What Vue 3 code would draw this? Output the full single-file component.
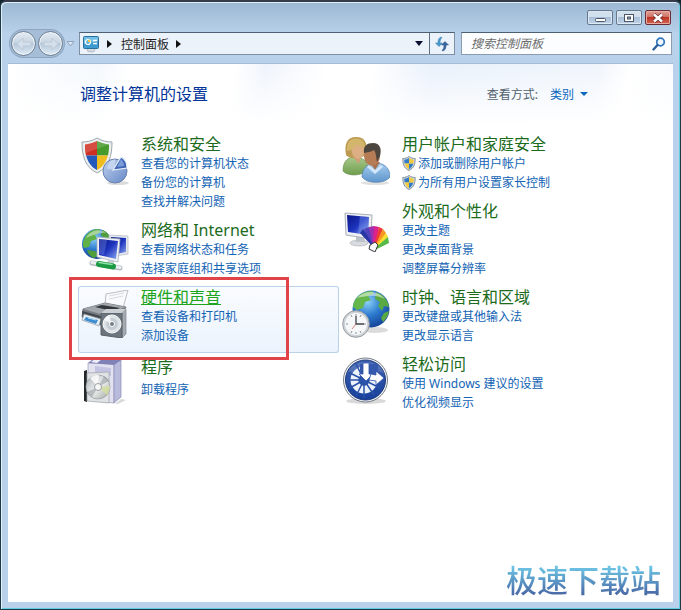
<template>
  <div class="window">
    <!-- Window buttons -->
    <header class="title-bar">
      <button class="win-btn" aria-label="最小化">
        <svg width="26" height="14" viewBox="0 0 26 14"><rect x="8.5" y="7.5" width="10" height="3" rx="1" fill="#fff" stroke="#4b5563" /></svg>
      </button>
      <button class="win-btn" aria-label="最大化">
        <svg width="26" height="14" viewBox="0 0 26 14">
          <rect x="8.5" y="3.5" width="9" height="7" fill="#fff" stroke="#4b5563" />
          <rect x="11.5" y="6" width="3" height="2" fill="#8fa6c0" stroke="#4b5563" />
        </svg>
      </button>
      <button class="win-btn close" aria-label="关闭">
        <svg width="26" height="14" viewBox="0 0 26 14">
          <path d="M9 3.5l8 7M17 3.5l-8 7" stroke="#6c3038" stroke-width="4" />
          <path d="M9 3.5l8 7M17 3.5l-8 7" stroke="#fff" stroke-width="2.4" />
        </svg>
      </button>
    </header>

    <!-- Navigation -->
    <nav class="nav-bar">
      <div class="history">
        <button class="round-btn" aria-label="后退">
          <svg width="24" height="24" viewBox="0 0 24 24"><path d="M11 6l-6 6 6 6v-4h8v-4h-8z" fill="#d3dfea" stroke="#bccad8" /></svg>
        </button>
        <button class="round-btn" aria-label="前进">
          <svg width="24" height="24" viewBox="0 0 24 24"><path d="M13 6l6 6-6 6v-4H5v-4h8z" fill="#d3dfea" stroke="#bccad8" /></svg>
        </button>
      </div>
      <button class="recent" aria-label="最近浏览">
        <svg width="9" height="6" viewBox="0 0 9 6"><path d="M1 .5h7L4.500 5z" fill="#d8e6f4" stroke="#8fa4bb" /></svg>
      </button>
      <div class="address">
        <svg class="address-icon" width="18" height="18" viewBox="0 0 18 18">
          <ellipse cx="9" cy="15" rx="4" ry="2" fill="#d5dbe2" stroke="#9aa5b0" stroke-width=".6" />
          <rect x="1.500" y="1.500" width="15" height="12" rx="1" fill="#3d9bd0" stroke="#2b6f9e" />
          <path d="M2 2h14v4L2 9z" fill="#72c0e6" />
          <circle cx="6" cy="7" r="2.500" fill="#5bb3dd" stroke="#fff" stroke-width="1.200" />
          <path d="M6 7V4.500A2.500 2.500 0 0 1 8.500 7z" fill="#f4c542" />
          <path d="M11 5.500h4M11 8.500h4" stroke="#fff" stroke-width="1.500" />
        </svg>
        <svg class="crumb-arrow" width="5" height="8" viewBox="0 0 5 8"><path d="M0 0l5 4-5 4z" fill="#111" /></svg>
        <button class="crumb">控制面板</button>
        <svg class="crumb-arrow" width="5" height="8" viewBox="0 0 5 8"><path d="M0 0l5 4-5 4z" fill="#111" /></svg>
        <button class="address-drop" aria-label="历史记录">
          <svg width="8" height="5" viewBox="0 0 8 5"><path d="M0 0h8L4 5z" fill="#0b1030" /></svg>
        </button>
        <button class="refresh" aria-label="刷新">
          <svg width="16" height="16" viewBox="0 0 16 16">
            <path d="M7 1C4.500 2 4 4 4 7H1.500L5 10.500 8.500 7H6c0-2.500.5-4 2-5.500z" fill="#4a9bd0" stroke="#2f78ad" stroke-width=".5" />
            <path d="M9 15c2.500-1 3-3 3-6h2.500L11 5.500 7.500 9H10c0 2.500-.5 4-2 5.500z" fill="#37679f" stroke="#284f82" stroke-width=".5" />
          </svg>
        </button>
      </div>
      <label class="search">
        <input type="text" placeholder="搜索控制面板" aria-label="搜索控制面板" />
        <svg width="14" height="14" viewBox="0 0 14 14">
          <circle cx="8.500" cy="5" r="3.800" fill="#eef7ff" stroke="#2f76bd" stroke-width="1.700" />
          <path d="M5.500 8L1.500 12.500" stroke="#2b5c9c" stroke-width="2.300" stroke-linecap="round" />
        </svg>
      </label>
    </nav>

    <!-- Content -->
    <main class="content">
      <div class="content-head">
        <h1>调整计算机的设置</h1>
        <div class="view-by">
          <label for="view-mode">查看方式:</label>
          <div class="view-select">
            <select id="view-mode" v-model="viewMode">
              <option>类别</option>
            </select>
            <svg width="8" height="4" viewBox="0 0 8 4"><path d="M0 0h8L4 4z" fill="#0b66bd" /></svg>
          </div>
        </div>
      </div>

      <div class="categories">
        <div v-for="(column, index) in columns" :key="index" class="column">
          <section
            v-for="item in column"
            :key="item.title"
            class="category"
            :class="{ active: item.active, single: item.links.length === 1 }"
          >
            <!-- Shield and pie -->
            <svg v-if="item.icon === 'security'" class="icon" viewBox="0 0 48 48">
              <ellipse cx="37" cy="46" rx="11" ry="2" fill="#000" opacity=".14" />
              <path d="M16 1C11 4 6 5 1 5c0 14 3 25 15 31C28 30 31 19 31 5 26 5 21 4 16 1z" fill="#eceff1" stroke="#9fa7ac" />
              <path d="M16 4C12 6 8 7 4 7.500c0 4 .2 7.500 1 11h11z" fill="#cf2f20" />
              <path d="M16 4c4 2 8 3 12 3.500 0 4-.2 7.500-1 11H16z" fill="#479a2c" />
              <path d="M5 18.500C7 25 10 30 16 33V18.500z" fill="#2259bb" />
              <path d="M27 18.500C25 25 22 30 16 33V18.500z" fill="#efbd1f" />
              <path d="M4 7.500C8 7 12 6 16 4c4 2 8 3 12 3.500L5 16z" fill="#fff" opacity=".15" />
              <circle cx="34" cy="34" r="12" fill="url(#pie)" stroke="#6780ae" />
              <path d="M34 33V22a12 12 0 0 0-8 10z" fill="#d8e5f8" opacity=".6" />
              <path d="M32 33l8-13c4 2 6 6 6 11z" fill="#3f65b4" stroke="#e6effc" stroke-width="1.200" />
              <path d="M36 30l4-8c2 2 3 4 3 7z" fill="#7a9bd9" />
            </svg>

            <!-- Globe and monitors -->
            <svg v-else-if="item.icon === 'network'" class="icon" viewBox="0 0 48 48">
              <circle cx="16" cy="21" r="15" fill="url(#earth)" />
              <path d="M3 16C6 9 12 6 18 6c3 3-1 5-4 6l2 4-6 2-2 6-5 1c-2-3-1-6 0-9z" fill="#5fb047" />
              <path d="M6 27l8 1 4 4-5 3c-3-1-6-4-7-8zM21 7c4 1 7 4 8 8l-5 1-4-4z" fill="#4f9e3b" />
              <path d="M5 15C9 7 20 5 25 10c-5-1-15 3-20 5z" fill="#fff" opacity=".45" />
              <path d="M28 12l19 1v18l-19 3z" fill="#e5e8ed" stroke="#b3bac4" stroke-width=".7" />
              <path d="M30 14l15 1v14l-15 3z" fill="url(#screen)" />
              <path d="M16 14l23 2-2 23-21-5z" fill="#eff1f4" stroke="#aab2bd" stroke-width=".8" />
              <path d="M18 16l19 2-2 18-17-4z" fill="url(#screen)" />
              <path d="M18 16l8 1-3 15-5-1z" fill="#8da7f4" opacity=".3" />
              <path d="M27 37l6 1v3l-7-1z" fill="#c7ccd2" />
              <path d="M11 40l28 5" stroke="#b3bac0" stroke-width="5" stroke-linecap="round" />
              <path d="M11 39.500l28 5" stroke="#eceff1" stroke-width="3" stroke-linecap="round" />
              <path d="M18 41l14 2.500" stroke="#1c9a43" stroke-width="6" stroke-linecap="round" />
              <path d="M18 39.500l13 2" stroke="#8be3a2" stroke-width="1.500" stroke-linecap="round" />
            </svg>

            <!-- Printer and speaker -->
            <svg v-else-if="item.icon === 'hardware'" class="icon" viewBox="0 0 48 48">
              <path d="M25 4l22-4-5 18-18-3z" fill="#f9fafb" stroke="#a8aeb5" stroke-width=".8" />
              <path d="M28 6l15-3M28 9l14-3" stroke="#d7dbe0" />
              <path d="M2 19l22-6 21 4-4 8-21 10L1 27z" fill="#777c82" stroke="#55595e" stroke-width=".7" />
              <path d="M2 19l22-6 21 4-22 8z" fill="#a2a7ad" />
              <path d="M21 15l18 3-8 3-17-4z" fill="#34383d" />
              <path d="M1 21l22 6v9L2 29z" fill="#42474d" />
              <path d="M3 24l17 5-2 7L1 30z" fill="#e6edf4" stroke="#8d979f" stroke-width=".7" />
              <path d="M5 27l12 3-2 4-12-4z" fill="#3c8ed0" />
              <path d="M7 28l8 2" stroke="#b9ddf5" />
              <path d="M41 23l4-4v25l-4 4z" fill="#a4aab0" stroke="#82888f" stroke-width=".7" />
              <path d="M20 23h21v25l-21-3z" fill="#6c757d" stroke="#596067" />
              <path d="M20 23l5-4h20l-4 4z" fill="#cbd0d5" />
              <circle cx="31" cy="34" r="9" fill="#dfe4e8" stroke="#f7f8f9" />
              <circle cx="31" cy="34" r="6" fill="#c5ccd1" />
              <path d="M31 34l-8-4a9 9 0 0 1 5-5z" fill="#fff" opacity=".75" />
              <circle cx="31" cy="34" r="2.500" fill="#737d85" stroke="#fff" />
            </svg>

            <!-- Software box -->
            <svg v-else-if="item.icon === 'programs'" class="icon" viewBox="0 0 48 48">
              <path d="M34 45l6-5 5 1-8 4z" fill="#000" opacity=".15" />
              <path d="M7 4l26-1v41L7 41z" fill="#e1e1f0" stroke="#9b9cba" stroke-width=".7" />
              <path d="M33 5l7-4v37l-7 6z" fill="#b9bbdc" stroke="#898bb5" stroke-width=".7" />
              <path d="M7 4l5-4 28 1-7 5z" fill="#7f81b7" />
              <path d="M10 3l4-3h7l-5 4z" fill="#eeeef8" />
              <path d="M14 7l16 2v8L14 15z" fill="#c3c3e4" />
              <path d="M3 12l3-1v32l-3-1z" fill="#24282d" />
              <path d="M6 14l22-1v31L6 42z" fill="#e0e3e5" stroke="#9ca1a5" stroke-width=".7" />
              <circle cx="17" cy="28" r="12" fill="url(#disc)" stroke="#959b9f" stroke-width=".7" />
              <path d="M17 28L9 19c3-3 6-4 9-3z" fill="#fff" opacity=".8" />
              <path d="M17 28l9 8c2-3 3-6 3-9z" fill="#d3dfa0" opacity=".8" />
              <path d="M17 28l11-6c-1-2-3-4-5-5z" fill="#6c7478" opacity=".4" />
              <path d="M17 28L6 33c1 2 3 4 5 5z" fill="#6c7478" opacity=".4" />
              <circle cx="17" cy="28" r="3.500" fill="#f7f8f8" stroke="#989fa3" />
            </svg>

            <!-- People -->
            <svg v-else-if="item.icon === 'users'" class="icon" viewBox="0 0 48 48">
              <ellipse cx="33" cy="46" rx="14" ry="2" fill="#000" opacity=".12" />
              <path d="M1 34c0-10 5-14 12-14s13 4 13 12c-4 7-20 8-25 2z" fill="url(#green)" stroke="#6b9153" stroke-width=".7" />
              <path d="M10 19h9l-2 8z" fill="#cf9e74" />
              <path d="M4 18C2 7 5 0 14 0c9 0 12 6 10 17-3 5-16 6-20 1z" fill="#bc9a51" />
              <ellipse cx="16" cy="13" rx="6.500" ry="9" fill="#dcae84" />
              <path d="M5 14C4 4 10 0 17 2c5 1 6 5 6 9-5-1-8-3-9-4-1 4-5 7-9 7z" fill="#d3b66c" />
              <path d="M20 40c0-9 6-14 14-14s14 5 14 14c-5 7-23 7-28 0z" fill="url(#blueShirt)" stroke="#4e7fae" stroke-width=".7" />
              <path d="M28 25h10l-5 8z" fill="#a8704b" />
              <ellipse cx="30" cy="19" rx="8" ry="10" fill="#b57c55" />
              <path d="M22 16C21 9 25 6 31 6c7 0 9 6 7 13l-3 6c-1-6-1-9-3-12-3 2-7 2-10 3z" fill="#4d463f" />
              <path d="M27 28l6 5 6-5 2 2-8 7-8-7z" fill="#d2e7fa" />
            </svg>

            <!-- Monitor and swatches -->
            <svg v-else-if="item.icon === 'appearance'" class="icon" viewBox="0 0 48 48">
              <ellipse cx="17" cy="39" rx="9" ry="3" fill="#d8dce0" stroke="#a4aab0" stroke-width=".6" />
              <path d="M14 31h8l1 7h-9z" fill="#bdc3c9" />
              <path d="M3 9l27 2-1 24-25-4z" fill="#eef0f3" stroke="#a8afb8" />
              <path d="M5 11l22 2-1 18-20-3z" fill="url(#screen)" />
              <path d="M18 12l9 1-1 18-10-2z" fill="#9ab5ff" opacity=".3" />
              <path d="M30 42l-12-13 3-4 12 14z" fill="#2735a5" />
              <path d="M31 42l-9-17 5-2 7 17z" fill="#5241bd" />
              <path d="M31 42l-4-19 5-1 3 20z" fill="#9d2fb0" />
              <path d="M31 42l1-20 5 1-3 19z" fill="#dc238d" />
              <path d="M32 42l5-19 4 2-7 17z" fill="#ee3b35" />
              <path d="M33 42l8-17 3 4-9 14z" fill="#f69724" />
              <path d="M33 43l11-14 2 4-11 11z" fill="#f5df30" />
              <path d="M33 44l13-11 1 6-12 6z" fill="#57b947" />
              <path d="M28 41l5-3 3 3-3 7-6-3z" fill="#f8f8f8" stroke="#35373c" />
            </svg>

            <!-- Globe and clock -->
            <svg v-else-if="item.icon === 'clock'" class="icon" viewBox="0 0 48 48">
              <ellipse cx="33" cy="40" rx="13" ry="3" fill="#000" opacity=".14" />
              <circle cx="29" cy="19" r="18.500" fill="url(#earth)" />
              <path d="M13 10c4-6 10-9 17-9l2 3-6 2 3 4-6 2-2 6-6 2-4-3c0-3 1-5 2-7z" fill="#65b64b" />
              <path d="M34 2c7 2 12 8 13 15l-5-1-2 5-4-5 2-4-5-3zM42 23l5-2c-1 5-3 8-6 11l-2-4z" fill="#5aa943" />
              <path d="M15 8C24-1 36 1 43 9c-10-5-18-3-28-1z" fill="#fff" opacity=".5" />
              <circle cx="14" cy="34" r="13.300" fill="#cdd2d6" stroke="#989fa5" />
              <circle cx="14" cy="34" r="11" fill="#f6f7f8" />
              <path d="M14 24v2M14 42v2M4 34h2M22 34h2M9 25l1 2M18 41l1 2M19 25l-1 2M9 43l1-2" stroke="#8b9197" />
              <path d="M14 26v8h8" fill="none" stroke="#3e444a" stroke-width="1.300" />
              <path d="M14 34l-4 5" stroke="#d34c44" stroke-width=".7" />
            </svg>

            <!-- Ease of access -->
            <svg v-else class="icon" viewBox="0 0 48 48">
              <ellipse cx="24" cy="44" rx="20" ry="3" fill="#000" opacity=".15" />
              <circle cx="23.500" cy="23" r="22" fill="#f4f5f7" stroke="#747c88" />
              <circle cx="23.500" cy="23" r="20" fill="url(#ease)" stroke="#1c397b" />
              <path d="M5 17C9 2 37 0 43 17c-9-5-26-5-38 0z" fill="#fff" opacity=".15" />
              <circle cx="22" cy="23" r="9.500" fill="none" stroke="#eef2fb" stroke-width="8" />
              <path d="M22 23L14 7M22 23L6 15M22 23H4M22 23L6 32M22 23l-8 16M22 23v18M22 23l10 15M22 23l16 8" stroke="#2b52a9" stroke-width="1.500" />
              <circle cx="22" cy="23" r="5.500" fill="#2b52a9" />
              <path d="M18 7h18v16H26l-4-2-4-2z" fill="#3559ac" />
              <path d="M21 6h6v11h4l-7 7-7-7h4z" fill="#fff" stroke="#2b52a9" stroke-width=".8" />
              <path d="M29 17l5 1v-4l8 7-8 7v-4l-7-1z" fill="#fff" stroke="#2b52a9" stroke-width=".8" />
            </svg>

            <div class="category-text">
              <h2><a href="#">{{ item.title }}</a></h2>
              <a v-for="link in item.links" :key="link" href="#" class="task">
                <svg v-if="item.shield" class="uac" viewBox="0 0 14 15">
                  <path d="M7 .5C5 2 3 2.500.800 2.500c0 6 1.200 9.500 6.200 12 5-2.500 6.200-6 6.200-12C11 2.500 9 2 7 .5z" fill="#d3dade" stroke="#6d7b87" stroke-width=".8" />
                  <path d="M7 2C5.500 3 4 3.500 2.200 3.700L2.600 7.500H7zM7 7.500h4.400C10.600 10 9.500 12 7 13.200z" fill="#327bc5" />
                  <path d="M7 2c1.500 1 3 1.500 4.800 1.700l-.4 3.800H7zM7 7.500H2.600C3.400 10 4.500 12 7 13.200z" fill="#f4ca3c" />
                </svg>
                {{ link }}
              </a>
            </div>
            <div v-if="item.active" class="marker"></div>
          </section>
        </div>
      </div>

      <div class="watermark">极速下载站</div>
    </main>

    <!-- Shared gradients -->
    <svg class="defs" width="0" height="0" aria-hidden="true">
      <defs>
        <linearGradient id="pie" x1="0" y1="0" x2="1" y2="1">
          <stop offset="0" stop-color="#c0d2ee" />
          <stop offset="1" stop-color="#6688c6" />
        </linearGradient>
        <radialGradient id="earth" cx=".4" cy=".3" r=".75">
          <stop offset="0" stop-color="#8ed3f7" />
          <stop offset=".5" stop-color="#2d7bd0" />
          <stop offset="1" stop-color="#123e91" />
        </radialGradient>
        <linearGradient id="screen" x1="0" y1="0" x2="1" y2="1">
          <stop offset="0" stop-color="#0a1585" />
          <stop offset=".5" stop-color="#1c33bd" />
          <stop offset="1" stop-color="#8ea8f0" />
        </linearGradient>
        <linearGradient id="disc" x1="0" y1="0" x2="1" y2="1">
          <stop offset="0" stop-color="#a7adb1" />
          <stop offset=".5" stop-color="#eef0f0" />
          <stop offset="1" stop-color="#9ba59d" />
        </linearGradient>
        <linearGradient id="green" x1="0" y1="0" x2="0" y2="1">
          <stop offset="0" stop-color="#a9c98b" />
          <stop offset="1" stop-color="#6f9e4e" />
        </linearGradient>
        <linearGradient id="blueShirt" x1="0" y1="0" x2="0" y2="1">
          <stop offset="0" stop-color="#a6cdf0" />
          <stop offset="1" stop-color="#5e96cb" />
        </linearGradient>
        <linearGradient id="ease" x1="0" y1="0" x2="0" y2="1">
          <stop offset="0" stop-color="#3c60b0" />
          <stop offset="1" stop-color="#173f9b" />
        </linearGradient>
      </defs>
    </svg>
  </div>
</template>

<script setup>
import { ref } from 'vue'

const viewMode = ref('类别')

const columns = [
  [
    { title: '系统和安全', icon: 'security', links: ['查看您的计算机状态', '备份您的计算机', '查找并解决问题'] },
    { title: '网络和 Internet', icon: 'network', links: ['查看网络状态和任务', '选择家庭组和共享选项'] },
    { title: '硬件和声音', icon: 'hardware', links: ['查看设备和打印机', '添加设备'], active: true },
    { title: '程序', icon: 'programs', links: ['卸载程序'] }
  ],
  [
    { title: '用户帐户和家庭安全', icon: 'users', links: ['添加或删除用户帐户', '为所有用户设置家长控制'], shield: true },
    { title: '外观和个性化', icon: 'appearance', links: ['更改主题', '更改桌面背景', '调整屏幕分辨率'] },
    { title: '时钟、语言和区域', icon: 'clock', links: ['更改键盘或其他输入法', '更改显示语言'] },
    { title: '轻松访问', icon: 'ease', links: ['使用 Windows 建议的设置', '优化视频显示'] }
  ]
]
</script>

<style>
body {
  background: #10242e;
}
</style>

<style scoped>
.window {
  display: flex;
  flex-direction: column;
  box-sizing: border-box;
  min-height: 100vh;
  padding: 0 7px 7px;
  border: 1px solid #1d3a48;
  border-top: 2px solid #343c4c;
  border-radius: 6px 6px 0 0;
  background: linear-gradient(#9bb8d3, #b9d1ea 32px, #b9d1ea);
  box-shadow: inset 1px 1px 0 #e3eef8, inset -1px -1px 0 #62cfe0;
  font-family: "Noto Sans", "Noto Sans CJK SC", sans-serif;
  font-size: 12px;
  color: #1e1e1e;
}

button,
input,
select {
  font: inherit;
  color: inherit;
  margin: 0;
  padding: 0;
  border: none;
  background: none;
}

svg {
  flex: none;
}

/* Title bar */
.title-bar {
  display: flex;
  justify-content: flex-end;
  gap: 3px;
  height: 22px;
  padding: 8px 2px 0 0;
}

.win-btn {
  display: flex;
  align-items: center;
  justify-content: center;
  box-sizing: border-box;
  width: 26px;
  height: 15px;
  overflow: hidden;
  border: 1px solid #66788c;
  border-radius: 2px;
  background: linear-gradient(#d2e0ee 50%, #a9bfd7 50%, #c0d4e8);
  box-shadow: inset 0 0 0 1px #dce8f4;
}

.win-btn.close {
  border-color: #6b2c34;
  background: linear-gradient(#e0a098, #cf6c60 50%, #b93426 50%, #d4644c);
  box-shadow: inset 0 0 0 1px #e6aca4;
}

/* Navigation */
.nav-bar {
  display: flex;
  align-items: center;
  height: 23px;
  padding: 0 1px 8px 2px;
}

.history {
  display: flex;
  gap: 2px;
  margin: -1px 0;
  padding: 1px;
  border-radius: 14px;
  background: #a5bdd6;
  box-shadow: 0 0 0 1px #8ea6bf;
}

.round-btn {
  display: flex;
  align-items: center;
  justify-content: center;
  box-sizing: border-box;
  width: 25px;
  height: 25px;
  border: 1px solid #6d7f93;
  border-radius: 50%;
  background: linear-gradient(#e3ebf3, #c6d3e0 50%, #b6c8da 50%, #dfeaf5);
  box-shadow: inset 0 0 0 1px #eff5fa;
}

.recent {
  display: flex;
  padding: 0 4px 0 2px;
}

.address {
  display: flex;
  align-items: center;
  flex: 1;
  box-sizing: border-box;
  height: 23px;
  padding-left: 2px;
  border: 1px solid #7d8fa3;
  border-top-color: #4d5f73;
  background: #ecf2fa;
}

.crumb-arrow {
  margin: 0 9px 0 7px;
}

.address-drop {
  display: flex;
  align-items: center;
  justify-content: center;
  width: 20px;
  height: 21px;
  margin-left: auto;
}

.refresh {
  display: flex;
  align-items: center;
  justify-content: center;
  width: 25px;
  height: 21px;
  border-left: 1px solid #5e7084;
}

.search {
  display: flex;
  align-items: center;
  box-sizing: border-box;
  width: 211px;
  height: 23px;
  margin-left: 6px;
  padding: 0 5px 0 9px;
  border: 1px solid #8a9caf;
  border-top-color: #4d5f73;
  background: #fbfdff;
}

.search input {
  flex: 1;
  min-width: 0;
  outline: none;
}

.search input::placeholder {
  font-style: italic;
  color: #6c6c6c;
  opacity: 1;
}

/* Content */
.content {
  display: flex;
  flex-direction: column;
  flex: 1;
  border-top: 1px solid #a2bdd6;
  background:
    linear-gradient(transparent, #fff 60px),
    linear-gradient(100deg, #fff 0, #f3f8fd 12%, #fff 16%, #fff 30%, #eff4fc 34%, #fff 42%, #fff 48%, #e9f1fb 56%, #f0f5fc 78%, #fff 82%, #e8f2fb);
}

.content-head {
  display: flex;
  align-items: center;
  justify-content: space-between;
  height: 24px;
  padding: 18px 85px 27px 72px;
}

h1 {
  margin: 0;
  font-size: 16px;
  font-weight: 400;
  line-height: 24px;
  color: #003399;
}

.view-by {
  display: flex;
  align-items: center;
  gap: 12px;
  color: #52626f;
}

.view-select {
  display: flex;
  align-items: center;
  gap: 5px;
}

.view-select select {
  appearance: none;
  color: #0b66bd;
}

.categories {
  display: flex;
  padding: 0 73px 0 70px;
}

.column {
  flex: 1;
  min-width: 0;
}

.category {
  position: relative;
  display: flex;
  box-sizing: border-box;
  padding: 0 2px 7px;
  border: 1px solid transparent;
  border-top: none;
  border-radius: 3px;
}

.category.active {
  border-color: #b9d2ea;
  background: linear-gradient(#fafcff, #ebf3fc);
  box-shadow: inset 0 1px 0 #b9d2ea;
}

.icon {
  width: 48px;
  height: 48px;
  margin: 4px 12px 0 0;
}

.category-text {
  display: flex;
  flex-direction: column;
  align-items: flex-start;
  padding-top: 1px;
  white-space: nowrap;
}

h2 {
  margin: 0;
  font-size: 16px;
  font-weight: 400;
  line-height: 20px;
}

a {
  text-decoration: none;
}

h2 a {
  color: #1c6b1c;
}

.active h2 a {
  color: #1ea51e;
  text-decoration: underline;
}

.task {
  display: flex;
  align-items: center;
  gap: 2px;
  line-height: 19px;
  color: #1263b4;
}

.uac {
  width: 14px;
  height: 15px;
}

.single .icon {
  margin-top: 6px;
}

.single .category-text {
  gap: 3px;
  padding-top: 4px;
}

/* Red frame over the highlighted category */
.marker {
  position: absolute;
  z-index: 1;
  top: -9px;
  left: -10px;
  box-sizing: border-box;
  width: 220px;
  height: 83px;
  border: 3px solid #e04348;
}

.watermark {
  margin-top: auto;
  margin-left: auto;
  padding: 0 12px 3px 0;
  font-family: "Noto Sans CJK SC", sans-serif;
  font-size: 31px;
  font-weight: 500;
  line-height: 40px;
  color: transparent;
  background: linear-gradient(#6cc3e4 20%, #4a6ca8 80%);
  background-clip: text;
}

.defs {
  position: absolute;
}
</style>
